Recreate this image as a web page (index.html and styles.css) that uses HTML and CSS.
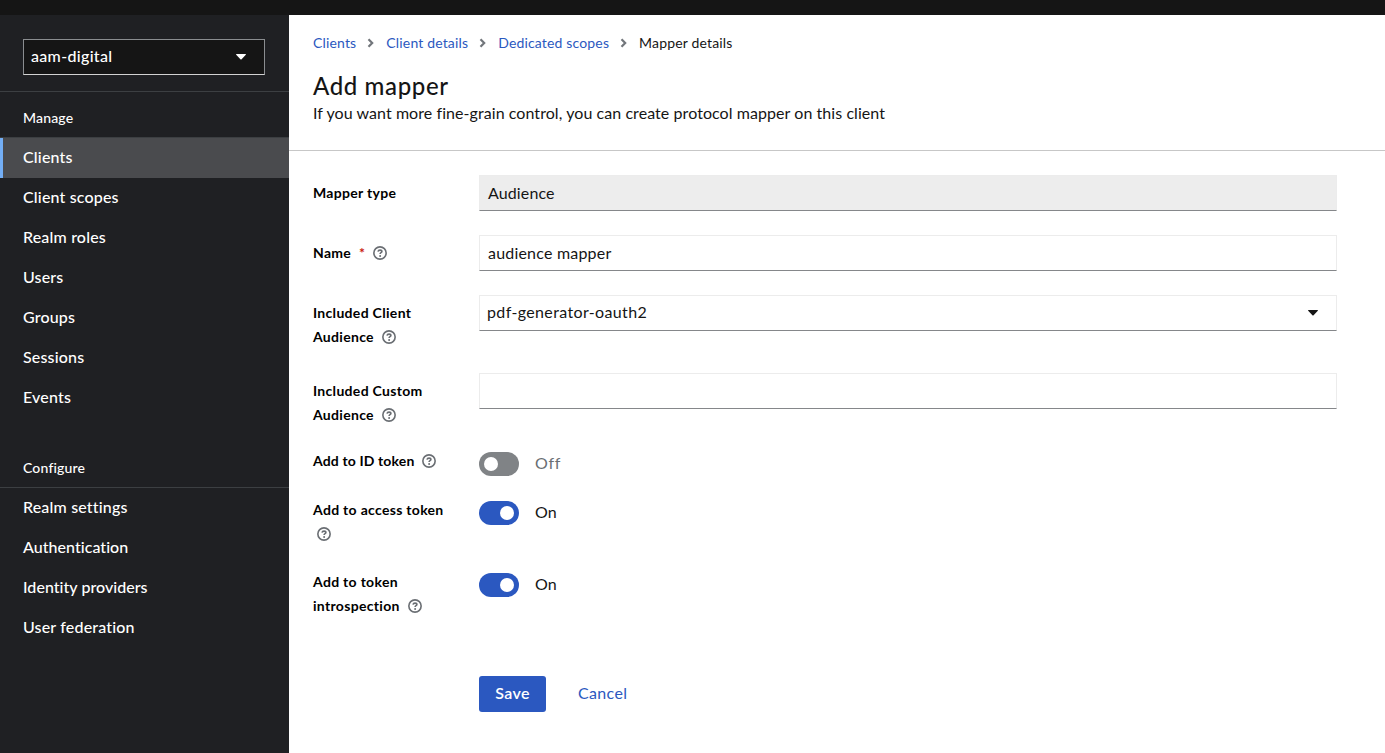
FILE: index.html
```html
<!DOCTYPE html>
<html lang="en">
<head>
<meta charset="utf-8">
<title>Add mapper</title>
<link rel="stylesheet" href="styles.css">
</head>
<body>
<svg class="defs" width="0" height="0">
  <symbol id="help" viewBox="0 0 14 14"><circle cx="7" cy="7" r="6.150" fill="none" stroke="currentColor" stroke-width="1.600"/><path d="M5 5.700C5.200 4.600 5.900 4.100 7 4.100c1.200 0 1.900.6 1.900 1.400C8.900 6.700 7.100 6.700 7.100 8" fill="none" stroke="currentColor" stroke-width="1.600"/><circle cx="7.100" cy="9.900" r="1" fill="currentColor"/></symbol>
  <symbol id="chevron" viewBox="0 0 7 10"><path d="M1.500 1.200 5.200 5 1.500 8.800" fill="none" stroke="currentColor" stroke-width="2.200"/></symbol>
  <symbol id="caret" viewBox="0 0 10 6"><path d="M.5 0h9c.5 0 .6.500.3.800L5.600 5.200c-.4.400-.8.400-1.200 0L.2.800C-.1.500 0 0 .5 0z" fill="currentColor"/></symbol>
</svg>
<header class="topbar"></header>
<div class="layout">
  <nav class="sidebar">
    <div class="realm-area"><button class="realm"><span>aam-digital</span><svg class="caret"><use href="#caret"/></svg></button></div>
    <section class="nav-section">
      <h2 class="nav-title">Manage</h2>
      <a class="nav-link active">Clients</a>
      <a class="nav-link">Client scopes</a>
      <a class="nav-link">Realm roles</a>
      <a class="nav-link">Users</a>
      <a class="nav-link">Groups</a>
      <a class="nav-link">Sessions</a>
      <a class="nav-link">Events</a>
    </section>
    <section class="nav-section">
      <h2 class="nav-title">Configure</h2>
      <a class="nav-link">Realm settings</a>
      <a class="nav-link tight">Authentication</a>
      <a class="nav-link tight">Identity providers</a>
      <a class="nav-link">User federation</a>
    </section>
  </nav>
  <main class="main">
    <div class="page-head">
      <div class="crumbs">
        <a>Clients</a><svg class="chevron"><use href="#chevron"/></svg>
        <a>Client details</a><svg class="chevron"><use href="#chevron"/></svg>
        <a>Dedicated scopes</a><svg class="chevron"><use href="#chevron"/></svg>
        <span>Mapper details</span>
      </div>
      <h1 class="title">Add mapper</h1>
      <p class="subtitle">If you want more fine-grain control, you can create protocol mapper on this client</p>
    </div>
    <form class="form">
      <div class="row"><div class="label">Mapper type</div><div class="field readonly">Audience</div></div>
      <div class="row"><div class="label">Name <span class="required">*</span><svg class="help"><use href="#help"/></svg></div><div class="field">audience mapper</div></div>
      <div class="row"><div class="label">Included Client<br>Audience<svg class="help"><use href="#help"/></svg></div><div class="field select"><span>pdf-generator-oauth2</span><svg class="caret"><use href="#caret"/></svg></div></div>
      <div class="row"><div class="label">Included Custom<br>Audience<svg class="help"><use href="#help"/></svg></div><div class="field"></div></div>
      <div class="row toggle-row"><div class="label id-label">Add to ID token<svg class="help"><use href="#help"/></svg></div><div class="toggle"><i class="switch"></i><span class="off">Off</span></div></div>
      <div class="row toggle-row"><div class="label">Add to access token<br><svg class="help help-line"><use href="#help"/></svg></div><div class="toggle"><i class="switch on"></i><span>On</span></div></div>
      <div class="row toggle-row"><div class="label">Add to token<br>introspection<svg class="help"><use href="#help"/></svg></div><div class="toggle"><i class="switch on"></i><span>On</span></div></div>
      <div class="actions"><button type="button" class="save">Save</button><a class="cancel">Cancel</a></div>
    </form>
  </main>
</div>
</body>
</html>
```
FILE: styles.css
```css
* { box-sizing: border-box; }
body { margin: 0; height: 753px; overflow: hidden; display: flex; flex-direction: column; background: #fff; color: #151515; font: 16px/24px Lato, "Open Sans", sans-serif; }
.defs { position: absolute; }
h1, h2, p { margin: 0; }
button { font: inherit; letter-spacing: inherit; }
.topbar { height: 15px; flex: none; background: #151515; }
.layout { display: flex; flex: 1; min-height: 0; }
.sidebar { width: 289px; flex: none; background: #1f2023; color: #fff; font-weight: 500; letter-spacing: .17px; }
.realm-area { height: 77px; padding: 24px 24px 0 23px; border-bottom: 1px solid #3c3f42; }
.realm { width: 242px; height: 36px; display: flex; align-items: center; justify-content: space-between; padding: 0 18px 2px 7px; background: #151515; color: #fff; border: 1px solid #8a8d90; border-bottom-color: #d2d2d2; letter-spacing: .32px; }
.caret { width: 10px; height: 6px; margin-top: 2px; }
.nav-section { margin-bottom: 30px; }
.nav-section .nav-title { height: 46px; padding: 14px 23px 0; border-bottom: 1px solid #3c3f42; font-size: 14px; font-weight: 500; }
.nav-section + .nav-section .nav-title { height: 40px; padding-top: 8px; }
.nav-link { display: flex; align-items: center; height: 40px; padding: 0 20px 2px; border-left: 3px solid transparent; }
.nav-link.active { background: #4a4b4e; border-left-color: #73aef5; }
.nav-link.tight { letter-spacing: .04px; }
.main { flex: 1; }
.page-head { height: 136px; padding: 16px 24px 0; border-bottom: 1px solid #c7c7c7; }
.crumbs { display: flex; align-items: center; height: 24px; font-size: 14px; letter-spacing: .16px; }
.crumbs a, .cancel { color: #2b58c0; }
.chevron { width: 7px; height: 10px; margin: 0 12px 0 11px; color: #72767b; }
.title { margin-top: 15px; font-size: 24px; line-height: 31px; font-weight: 500; letter-spacing: .62px; }
.subtitle { letter-spacing: .065px; }
.form { padding: 24px 48px 0 24px; display: flex; flex-direction: column; gap: 24px; }
.row { display: grid; grid-template-columns: 166px 1fr; align-items: start; }
.label { padding-top: 6px; font-size: 14px; font-weight: 700; letter-spacing: .31px; color: #000; white-space: nowrap; }
.id-label { letter-spacing: .14px; }
.required { color: #c9190b; margin-left: 4px; }
.help { width: 14px; height: 14px; margin-left: 8px; vertical-align: -2px; color: #6a6e73; }
.help-line { margin-left: 4px; }
.field { height: 36px; display: flex; align-items: center; padding: 0 8px; border: 1px solid #ececec; border-bottom-color: #85878a; background: #fff; letter-spacing: .2px; }
.readonly { background: #ededed; letter-spacing: .12px; }
.select { justify-content: space-between; padding: 0 18px 2px 7px; letter-spacing: .36px; }
.toggle-row { min-height: 25px; }
.toggle-row .label { padding: 0; margin-top: -2px; }
.toggle-row + .toggle-row .label { margin-bottom: 2px; }
.toggle-row .id-label { margin-bottom: 0; }
.toggle { display: flex; gap: 16px; padding-top: 1px; }
.toggle span { height: 24px; line-height: 22px; letter-spacing: .1px; }
.switch { width: 40px; height: 24px; padding: 5px; border-radius: 12px; background: #808386; }
.switch::before { content: ""; display: block; width: 14px; height: 14px; border-radius: 50%; background: #fff; }
.switch.on { background: #2b58c0; }
.switch.on::before { margin-left: 16px; }
.toggle .off { color: #6a6e73; letter-spacing: .7px; }
.actions { display: flex; margin: 32px 0 0 166px; letter-spacing: .35px; }
.save { width: 67px; height: 36px; padding: 0 0 2px; border: 0; border-radius: 3px; background: #2b58c0; color: #fff; font-weight: 600; }
.cancel { margin-left: 32px; line-height: 34px; }
```
